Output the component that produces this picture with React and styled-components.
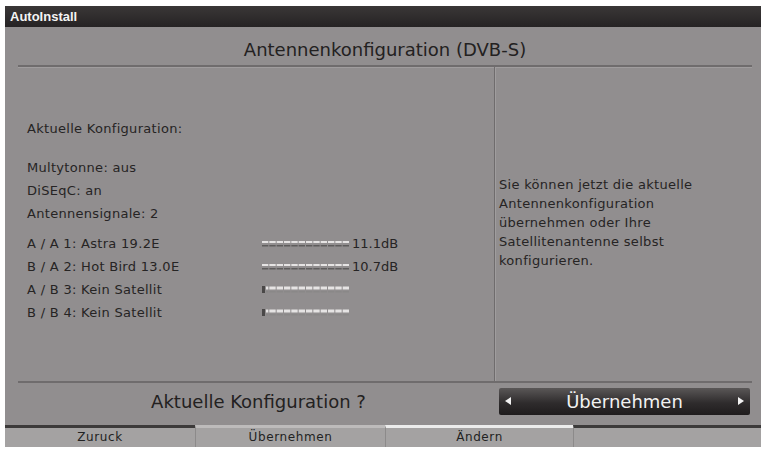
import React from "react";
import styled, { createGlobalStyle } from "styled-components";

const Global = createGlobalStyle`
  html, body { margin: 0; padding: 0; background: #ffffff; }
  body { font-family: "DejaVu Sans", "Liberation Sans", sans-serif; }
`;

const Screen = styled.div`
  width: 756px;
  height: 441px;
  margin: 6px 0 0 5px;
  display: flex;
  flex-direction: column;
  background: #918e8f;
`;

const TitleBar = styled.div`
  height: 21px;
  background: linear-gradient(#3a3737, #262324);
  color: #f4f4f4;
  font-family: "Liberation Sans", Arial, sans-serif;
  font-weight: bold;
  font-size: 13px;
  line-height: 21px;
  padding-left: 5px;
`;

const Body = styled.div`
  flex: 1;
  display: flex;
  flex-direction: column;
  padding: 0 9px 0 13px;
`;

const Heading = styled.div`
  height: 38px;
  font-size: 18px;
  color: #232121;
  text-align: center;
  line-height: 46px;
  border-bottom: 2px solid #6f6c6d;
  box-shadow: 0 1px 0 #a09d9e;
`;

const Main = styled.div`
  height: 314px;
  display: grid;
  grid-template-columns: 477px 1fr;
  border-bottom: 2px solid #6f6c6d;
`;

const Left = styled.div`
  border-right: 1px solid #6f6c6d;
  box-shadow: 1px 0 0 #a09d9e;
  padding: 50px 0 0 9px;
  font-size: 13px;
  letter-spacing: 0.3px;
  color: #262424;
`;

const Line = styled.div`
  height: 23px;
  line-height: 23px;
  margin-bottom: ${(p) => p.$gap || 0}px;
`;

const SatRow = styled.div`
  height: 23px;
  display: grid;
  grid-template-columns: 235px 90px auto;
  align-items: center;
`;

const Db = styled.span`
  font-size: 13px;
  letter-spacing: 0;
`;

const Right = styled.div`
  padding: 108px 0 0 4px;
  font-size: 13px;
  letter-spacing: 0.3px;
  line-height: 19px;
  color: #262424;
`;

const Bottom = styled.div`
  height: 40px;
  padding-bottom: 4px;
  box-sizing: border-box;
  display: grid;
  grid-template-columns: 481px 1fr;
  align-items: center;
`;

const Question = styled.div`
  text-align: center;
  font-size: 18px;
  color: #232121;
`;

const Button = styled.div`
  height: 27px;
  display: flex;
  align-items: center;
  justify-content: space-between;
  padding: 0 6px;
  border-radius: 2px;
  background: linear-gradient(#5a5757, #2f2c2d 55%, #1f1c1d);
  color: #f2f2f2;
  font-size: 18px;
  margin-right: 2px;
`;

const Arrow = styled.svg`
  width: 6px;
  height: 8px;
  display: block;
`;

const Tabs = styled.div`
  height: 22px;
  display: grid;
  grid-template-columns: 190px 190px 188px 1fr;
  background: #a4a2a2;
`;

const Tab = styled.div`
  border-top: 3px solid ${(p) => p.$bar};
  border-left: ${(p) => (p.$first ? "none" : "1px solid #8c8a8a")};
  font-size: 12px;
  letter-spacing: 0.6px;
  color: #222;
  text-align: center;
  line-height: 19px;
`;

function Bar({ empty }) {
  const n = 12;
  const w = 88;
  const seg = w / n;
  return (
    <svg width={w} height={9} viewBox={`0 0 ${w} 9`}>
      {empty && <rect x="0" y="1" width="3" height="7" fill="#4a4848" />}
      {Array.from({ length: n }).map((_, i) => {
        const x = i * seg + (empty && i === 0 ? 4 : 0);
        const wd = seg - 1 - (empty && i === 0 ? 4 : 0);
        return (
          <g key={i}>
            <rect x={x} y={empty ? 1.5 : 2} width={wd} height={empty ? 3 : 2} fill="#e6e4e4" />
            <rect x={x} y="6" width={wd} height="1.5" fill={empty ? "#8a8888" : "#5e5c5c"} />
          </g>
        );
      })}
    </svg>
  );
}

const sats = [
  { l: "A / A 1: Astra 19.2E", db: "11.1dB" },
  { l: "B / A 2: Hot Bird 13.0E", db: "10.7dB" },
  { l: "A / B 3: Kein Satellit", empty: true },
  { l: "B / B 4: Kein Satellit", empty: true },
];

export default function App() {
  return (
    <>
      <Global />
      <Screen>
        <TitleBar>AutoInstall</TitleBar>
        <Body>
          <Heading>Antennenkonfiguration (DVB-S)</Heading>
          <Main>
            <Left>
              <Line $gap={16}>Aktuelle Konfiguration:</Line>
              <Line>Multytonne: aus</Line>
              <Line>DiSEqC: an</Line>
              <Line $gap={7}>Antennensignale: 2</Line>
              {sats.map((s) => (
                <SatRow key={s.l}>
                  <span>{s.l}</span>
                  <Bar empty={s.empty} />
                  <Db>{s.db || ""}</Db>
                </SatRow>
              ))}
            </Left>
            <Right>
              Sie können jetzt die aktuelle
              <br />
              Antennenkonfiguration
              <br />
              übernehmen oder Ihre
              <br />
              Satellitenantenne selbst
              <br />
              konfigurieren.
            </Right>
          </Main>
          <Bottom>
            <Question>Aktuelle Konfiguration ?</Question>
            <Button>
              <Arrow viewBox="0 0 6 8">
                <path d="M6 0 L0 4 L6 8 Z" fill="#f2f2f2" />
              </Arrow>
              <span>Übernehmen</span>
              <Arrow viewBox="0 0 6 8">
                <path d="M0 0 L6 4 L0 8 Z" fill="#f2f2f2" />
              </Arrow>
            </Button>
          </Bottom>
        </Body>
        <Tabs>
          <Tab $first $bar="#3c3a3a">Zuruck</Tab>
          <Tab $bar="#bdbbbb">Übernehmen</Tab>
          <Tab $bar="#ececec">Ändern</Tab>
          <Tab $bar="#3c3a3a"></Tab>
        </Tabs>
      </Screen>
    </>
  );
}
